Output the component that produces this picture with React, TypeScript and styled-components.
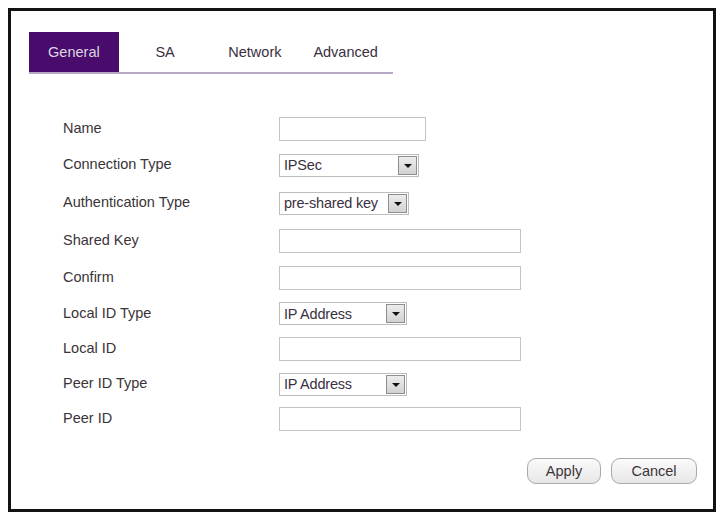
import React from 'react';
import styled, { createGlobalStyle } from 'styled-components';

const GlobalStyle = createGlobalStyle`
	* { box-sizing: border-box; }
	body {
		margin: 0;
		background: #ffffff;
		font-family: 'Liberation Sans', Arial, sans-serif;
		color: #333333;
	}
`;

type Field =
	| { label: string; kind: 'input'; width: number }
	| { label: string; kind: 'select'; width: number; value: string };

const fields: Field[] = [
	{ label: 'Name', kind: 'input', width: 147 },
	{ label: 'Connection Type', kind: 'select', width: 140, value: 'IPSec' },
	{ label: 'Authentication Type', kind: 'select', width: 130, value: 'pre-shared key' },
	{ label: 'Shared Key', kind: 'input', width: 242 },
	{ label: 'Confirm', kind: 'input', width: 242 },
	{ label: 'Local ID Type', kind: 'select', width: 128, value: 'IP Address' },
	{ label: 'Local ID', kind: 'input', width: 242 },
	{ label: 'Peer ID Type', kind: 'select', width: 128, value: 'IP Address' },
	{ label: 'Peer ID', kind: 'input', width: 242 },
];

// row heights follow the uneven spacing of the original form
const rowHeights = [35.5, 37.25, 39, 37.25, 36, 35.5, 35, 35, 35.5];

const tabs = [
	{ name: 'General', width: 90 },
	{ name: 'SA', width: 93 },
	{ name: 'Network', width: 87 },
	{ name: 'Advanced', width: 95 },
];

export default function App() {
	return (
		<>
			<GlobalStyle />
			<Frame>
				<TabBar>
					{tabs.map((tab, i) => (
						<Tab key={tab.name} $width={tab.width} $active={i === 0}>
							{tab.name}
						</Tab>
					))}
				</TabBar>

				<Form $rows={rowHeights}>
					{fields.map((field) => (
						<React.Fragment key={field.label}>
							<Label>{field.label}</Label>
							<Cell>
								{field.kind === 'input' ? (
									<TextInput type="text" $width={field.width} />
								) : (
									<SelectBox $width={field.width}>
										<SelectValue>{field.value}</SelectValue>
										<ArrowBox>
											<Triangle />
										</ArrowBox>
									</SelectBox>
								)}
							</Cell>
						</React.Fragment>
					))}
				</Form>

				<Actions>
					<Button $width={74}>Apply</Button>
					<Button $width={86}>Cancel</Button>
				</Actions>
			</Frame>
		</>
	);
}

const Frame = styled.div`
	margin: 8px 0 0 8px;
	width: 708px;
	height: 504px;
	border: 3px solid #121212;
	background: #ffffff;
	padding: 21px 16px 0 18px;
	display: flex;
	flex-direction: column;
`;

const TabBar = styled.div`
	display: flex;
	align-items: flex-end;
	width: 364px;
	border-bottom: 2px solid #b7a8c6;
`;

const Tab = styled.div<{ $width: number; $active?: boolean }>`
	width: ${(p) => p.$width}px;
	height: 40px;
	display: flex;
	align-items: center;
	justify-content: center;
	font-size: 14.5px;
	color: ${(p) => (p.$active ? '#dcd6e2' : '#3a3040')};
	background: ${(p) => (p.$active ? '#4a0c6c' : 'transparent')};
`;

const Form = styled.div<{ $rows: number[] }>`
	display: grid;
	grid-template-columns: 216px 1fr;
	grid-template-rows: ${(p) => p.$rows.map((h) => `${h}px`).join(' ')};
	align-items: center;
	margin-top: 37px;
	padding-left: 34px;
`;

const Label = styled.div`
	font-size: 14.5px;
	color: #3a3438;
	margin-top: -2px;
`;

const Cell = styled.div`
	display: flex;
	align-items: center;
`;

const TextInput = styled.input<{ $width: number }>`
	width: ${(p) => p.$width}px;
	height: 24px;
	border: 1px solid #c4c4c4;
	background: #ffffff;
	padding: 0 4px;
	font-family: inherit;
	font-size: 14px;
	outline: none;
`;

const SelectBox = styled.div<{ $width: number }>`
	width: ${(p) => p.$width}px;
	height: 23px;
	border: 1px solid #bdbdbd;
	background: #ffffff;
	display: flex;
	align-items: center;
	justify-content: space-between;
	padding: 0 1px 0 4px;
`;

const SelectValue = styled.span`
	font-size: 14.5px;
	letter-spacing: -0.2px;
	color: #3a3040;
	white-space: nowrap;
`;

const ArrowBox = styled.span`
	width: 19px;
	height: 19px;
	border: 1px solid #8e8e8e;
	background: linear-gradient(#ececec, #d2d2d2);
	display: flex;
	align-items: center;
	justify-content: center;
	flex-shrink: 0;
`;

const Triangle = styled.span`
	width: 0;
	height: 0;
	border-left: 4px solid transparent;
	border-right: 4px solid transparent;
	border-top: 4px solid #111111;
	margin-top: 1px;
`;

const Actions = styled.div`
	display: flex;
	justify-content: flex-end;
	gap: 10px;
	margin-top: 21px;
`;

const Button = styled.button<{ $width: number }>`
	width: ${(p) => p.$width}px;
	height: 26px;
	border: 1px solid #a9a9a9;
	border-radius: 9px;
	background: linear-gradient(#fbfbfb, #e6e6e6);
	font-family: inherit;
	font-size: 14.5px;
	color: #3a3438;
	padding: 0;
	cursor: pointer;
`;
